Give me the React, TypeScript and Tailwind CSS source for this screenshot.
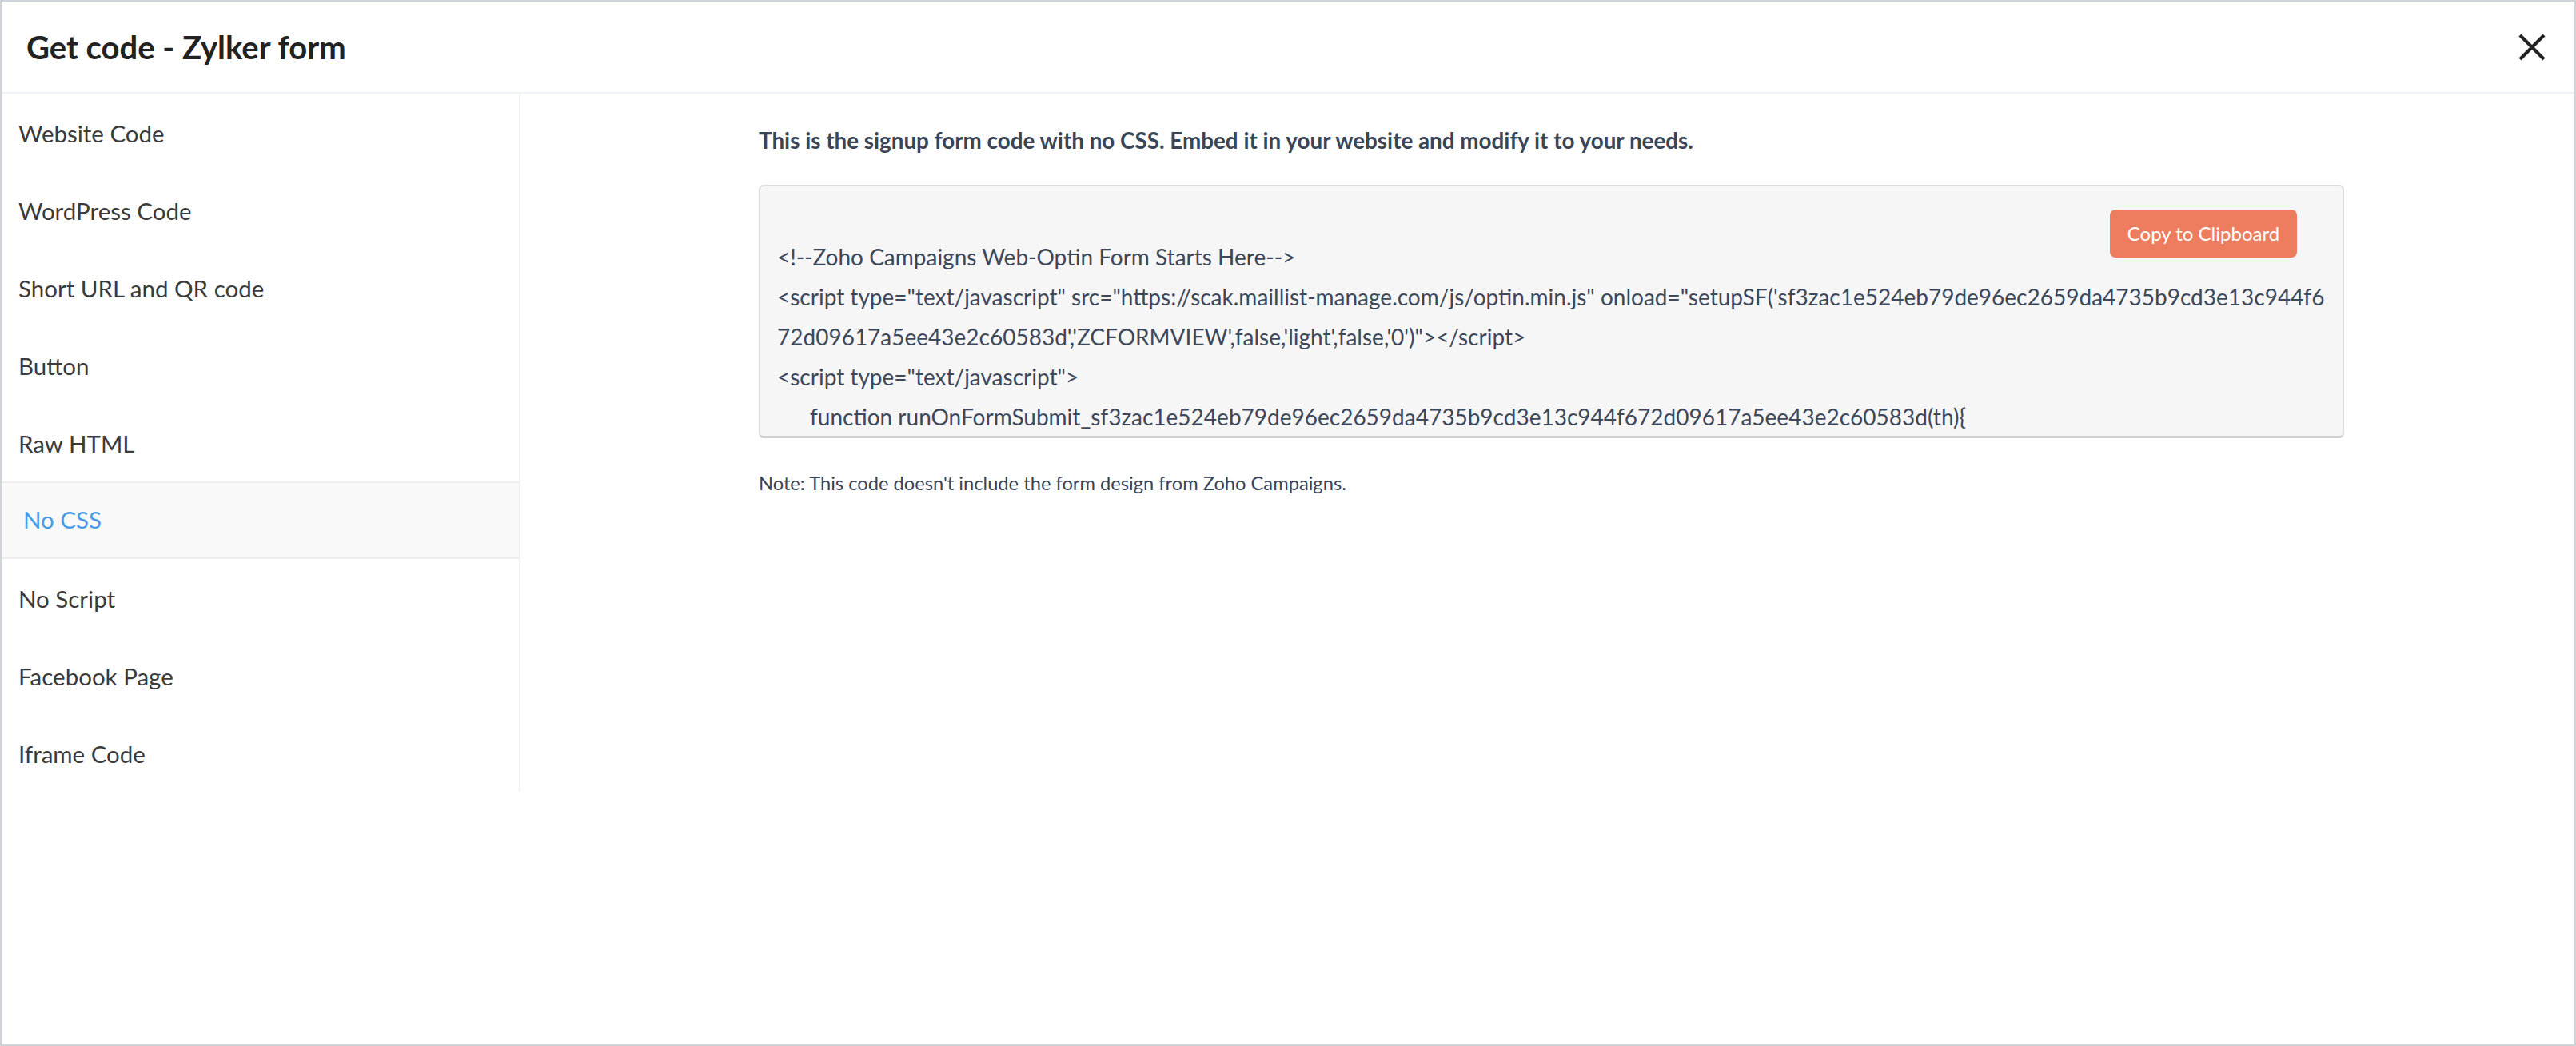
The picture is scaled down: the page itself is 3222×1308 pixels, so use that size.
import React from 'react';

const menuItems = [
  'Website Code',
  'WordPress Code',
  'Short URL and QR code',
  'Button',
  'Raw HTML',
  'No CSS',
  'No Script',
  'Facebook Page',
  'Iframe Code',
];

const codeLines = [
  { text: '<!--Zoho Campaigns Web-Optin Form Starts Here-->', indent: false },
  {
    text: `<script type="text/javascript" src="https://scak.maillist-manage.com/js/optin.min.js" onload="setupSF('sf3zac1e524eb79de96ec2659da4735b9cd3e13c944f672d09617a5ee43e2c60583d','ZCFORMVIEW',false,'light',false,'0')"></script>`,
    indent: false,
  },
  { text: '<script type="text/javascript">', indent: false },
  {
    text: 'function runOnFormSubmit_sf3zac1e524eb79de96ec2659da4735b9cd3e13c944f672d09617a5ee43e2c60583d(th){',
    indent: true,
  },
];

function CloseIcon() {
  return (
    <svg width="34" height="34" viewBox="0 0 34 34" fill="none">
      <path d="M2 2L32 32M32 2L2 32" stroke="#222222" strokeWidth="4.2" />
    </svg>
  );
}

export default function App() {
  const active = 'No CSS';

  return (
    <div className="w-[3222px] h-[1308px] bg-white border-2 border-[#cfd4d9] flex flex-col font-[Lato,'Liberation_Sans',sans-serif] overflow-hidden">
      {/* Header */}
      <div className="h-[115px] shrink-0 border-b-2 border-[#eef3f7] flex items-center justify-between pl-[31px] pr-[36px]">
        <h1 className="text-[40px] font-bold text-[#222222] leading-none">Get code - Zylker form</h1>
        <button className="p-0">
          <CloseIcon />
        </button>
      </div>

      <div className="flex flex-1 items-start">
        {/* Sidebar */}
        <div className="w-[649px] shrink-0 border-r-2 border-[#f0f3f6] flex flex-col">
          {menuItems.map((item) =>
            item === active ? (
              <div
                key={item}
                className="h-[97px] flex items-center pl-[27px] bg-[#f9f9f9] border-y-2 border-[#eceef0] text-[29.5px] text-[#4a9be6]"
              >
                {item}
              </div>
            ) : (
              <div key={item} className="h-[97px] flex items-center pl-[21px] pt-[3px] text-[29.5px] text-[#3b3b3b]">
                {item}
              </div>
            )
          )}
        </div>

        {/* Content */}
        <div className="flex-1 pl-[298px] pt-[40px]">
          <p className="text-[27.8px] leading-[38px] font-bold text-[#3a4557]">
            This is the signup form code with no CSS. Embed it in your website and modify it to your needs.
          </p>

          <div className="relative mt-[36px] w-[1983px] h-[317px] overflow-hidden rounded-[6px] border-2 border-[#dcdcdc] border-b-[3px] border-b-[#d2d2d2] bg-[#f6f6f6]">
            <button className="absolute top-[29px] right-[57px] w-[234px] h-[60px] rounded-[7px] bg-[#ee7d5f] text-white text-[24px]">
              Copy to Clipboard
            </button>
            <div className="pt-[63px] pl-[21px] pr-[21px] text-[28px] leading-[50px] text-[#3d485a] break-all">
              {codeLines.map((line, i) => (
                <div key={i} className={line.indent ? 'pl-[41px]' : ''}>
                  {line.text}
                </div>
              ))}
            </div>
          </div>

          <p className="mt-[40px] text-[23.7px] leading-[32px] text-[#3a4557]">
            Note: This code doesn't include the form design from Zoho Campaigns.
          </p>
        </div>
      </div>
    </div>
  );
}
